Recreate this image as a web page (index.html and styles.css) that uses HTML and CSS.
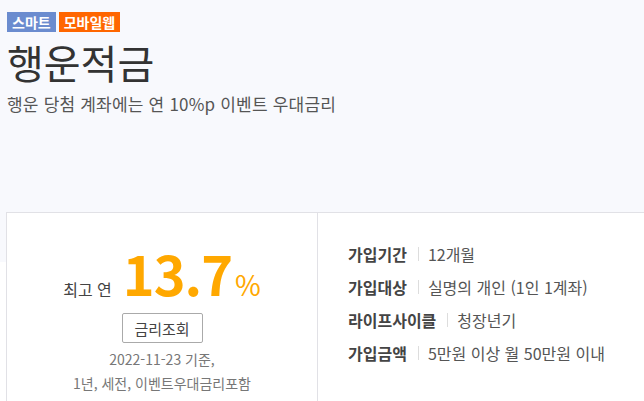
FILE: index.html
```html
<!DOCTYPE html>
<html lang="ko">
<head>
  <meta charset="UTF-8">
  <meta name="viewport" content="width=device-width, initial-scale=1.0">
  <title>행운적금</title>
  <link rel="stylesheet" href="styles.css">
</head>
<body>
  <!-- Product Header -->
  <header class="product-head">
    <div class="badges">
      <span class="badge smart">스마트</span>
      <span class="badge mobile">모바일웹</span>
    </div>
    <h1>행운적금</h1>
    <p class="desc">행운 당첨 계좌에는 연 10%p 이벤트 우대금리</p>
  </header>

  <!-- Product Summary -->
  <section class="summary">
    <div class="rate-box">
      <div class="rate">
        <span class="rate-label">최고 연</span>
        <strong class="rate-num">13.7</strong><span class="rate-unit">%</span>
      </div>
      <button class="rate-btn">금리조회</button>
      <p class="rate-note">2022-11-23 기준,<br>1년, 세전, 이벤트우대금리포함</p>
    </div>
    <dl class="info">
      <div class="info-row"><dt>가입기간</dt><dd>12개월</dd></div>
      <div class="info-row"><dt>가입대상</dt><dd>실명의 개인 (1인 1계좌)</dd></div>
      <div class="info-row"><dt>라이프사이클</dt><dd>청장년기</dd></div>
      <div class="info-row"><dt>가입금액</dt><dd>5만원 이상 월 50만원 이내</dd></div>
    </dl>
  </section>
</body>
</html>
```

FILE: styles.css
```css
/* Global */
body {
  margin: 0;
  font-family: "Noto Sans CJK KR", "Noto Sans", sans-serif;
  color: #333;
  background: linear-gradient(#f8f9fd 262px, #fff 262px);
  overflow: hidden;
}

/* Header */
.product-head {
  padding: 12px 7px 0;
  height: 200px;
  box-sizing: border-box;
}

.badges {
  display: flex;
  gap: 3px;
}

.badge {
  display: inline-block;
  height: 20px;
  line-height: 20px;
  padding: 0 5px;
  font-size: 14px;
  font-weight: bold;
  color: #fff;
}

.badge.smart {
  background-color: #6b8ccf;
}

.badge.mobile {
  background-color: #ff6600;
}

h1 {
  margin: 6px 0 0;
  font-size: 40px;
  font-weight: normal;
  line-height: 48px;
  color: #333;
}

.desc {
  margin: 5px 0 0;
  font-size: 17px;
  letter-spacing: 0.2px;
  color: #555;
}

/* Summary */
.summary {
  display: flex;
  margin: 12px 0 0 6px;
  background-color: #fff;
  border-top: 1px solid #e1e1e6;
  border-left: 1px solid #e1e1e6;
  height: 200px;
}

.rate-box {
  width: 310px;
  border-right: 1px solid #e1e1e6;
  text-align: center;
  padding-top: 28px;
}

.rate {
  display: flex;
  justify-content: center;
  align-items: baseline;
  margin-left: 0;
}

.rate-label {
  font-size: 16px;
  color: #444;
  margin-right: 11px;
}

.rate-num {
  font-size: 54px;
  line-height: 64px;
  font-weight: bold;
  color: #ffa800;
  letter-spacing: -1px;
}

.rate-unit {
  font-size: 28px;
  color: #ffa800;
  margin-left: 3px;
}

.rate-btn {
  margin-top: 8px;
  width: 81px;
  height: 30px;
  background: #fff;
  border: 1px solid #aaa;
  border-radius: 2px;
  font-family: inherit;
  font-size: 15px;
  color: #444;
}

.rate-note {
  margin: 4px 0 0;
  font-size: 14px;
  line-height: 24px;
  color: #777;
}

.info {
  margin: 24px 0 0 30px;
}

.info-row {
  display: flex;
  align-items: center;
  height: 33px;
  font-size: 16px;
}

.info dt {
  font-weight: bold;
  color: #444;
}

.info dd {
  margin: 0 0 0 11px;
  padding-left: 9px;
  border-left: 1px solid #ddd;
  line-height: 14px;
  color: #555;
}
```
